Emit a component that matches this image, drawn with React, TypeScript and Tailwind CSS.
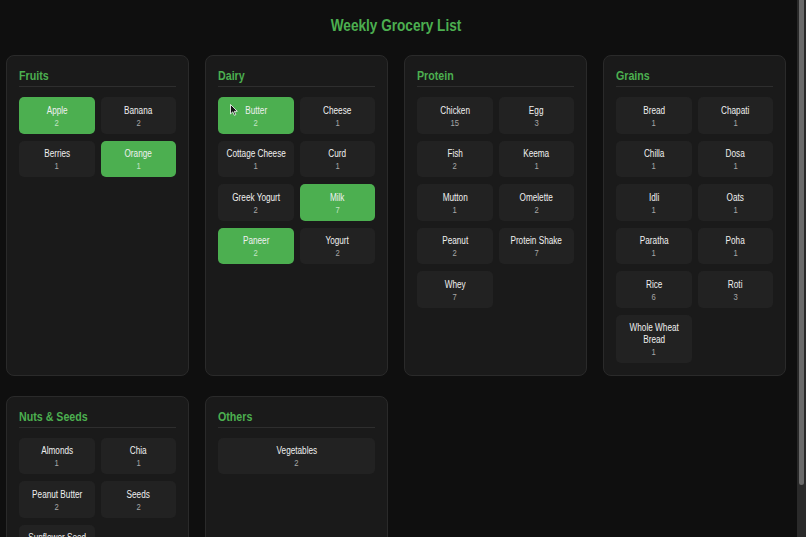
import React from "react"

type Item = { name: string; count: number; selected?: boolean }
type Category = { title: string; items: Item[] }

const categories: Category[] = [
  {
    title: "Fruits",
    items: [
      { name: "Apple", count: 2, selected: true },
      { name: "Banana", count: 2 },
      { name: "Berries", count: 1 },
      { name: "Orange", count: 1, selected: true },
    ],
  },
  {
    title: "Dairy",
    items: [
      { name: "Butter", count: 2, selected: true },
      { name: "Cheese", count: 1 },
      { name: "Cottage Cheese", count: 1 },
      { name: "Curd", count: 1 },
      { name: "Greek Yogurt", count: 2 },
      { name: "Milk", count: 7, selected: true },
      { name: "Paneer", count: 2, selected: true },
      { name: "Yogurt", count: 2 },
    ],
  },
  {
    title: "Protein",
    items: [
      { name: "Chicken", count: 15 },
      { name: "Egg", count: 3 },
      { name: "Fish", count: 2 },
      { name: "Keema", count: 1 },
      { name: "Mutton", count: 1 },
      { name: "Omelette", count: 2 },
      { name: "Peanut", count: 2 },
      { name: "Protein Shake", count: 7 },
      { name: "Whey", count: 7 },
    ],
  },
  {
    title: "Grains",
    items: [
      { name: "Bread", count: 1 },
      { name: "Chapati", count: 1 },
      { name: "Chilla", count: 1 },
      { name: "Dosa", count: 1 },
      { name: "Idli", count: 1 },
      { name: "Oats", count: 1 },
      { name: "Paratha", count: 1 },
      { name: "Poha", count: 1 },
      { name: "Rice", count: 6 },
      { name: "Roti", count: 3 },
      { name: "Whole Wheat Bread", count: 1 },
    ],
  },
  {
    title: "Nuts & Seeds",
    items: [
      { name: "Almonds", count: 1 },
      { name: "Chia", count: 1 },
      { name: "Peanut Butter", count: 2 },
      { name: "Seeds", count: 2 },
      { name: "Sunflower Seed", count: 1 },
    ],
  },
  {
    title: "Others",
    items: [{ name: "Vegetables", count: 2 }],
  },
]

// the screenshot's type is narrow, so glyphs get squeezed a bit horizontally
function GroceryItem({ item, hovered }: { item: Item; hovered?: boolean }) {
  return (
    <div
      className={
        item.selected
          ? "relative rounded-[5px] bg-[#4caf50] px-1 pb-[5px] pt-[7.5px] text-center"
          : "relative rounded-[5px] bg-[#222222] px-1 pb-[5px] pt-[7.5px] text-center"
      }
    >
      <div className="overflow-hidden">
        <div className="-ml-[11%] w-[122%] scale-x-[0.82] text-[10px] leading-[11.5px] text-[#f0f0f0]">
          {item.name}
        </div>
      </div>
      <div
        className={
          item.selected
            ? "mt-[1.5px] scale-x-[0.85] text-[9px] leading-[11px] text-[#c5e3c6]"
            : "mt-[1.5px] scale-x-[0.85] text-[9px] leading-[11px] text-[#a8a8a8]"
        }
      >
        {item.count}
      </div>
      {hovered && (
        <svg
          className="absolute left-[12px] top-[7px]"
          width="8"
          height="12"
          viewBox="0 0 8 12"
        >
          <path
            d="M0.5 0.5 L0.5 10 L2.8 7.8 L4.4 11.3 L5.8 10.7 L4.3 7.3 L7.3 7.3 Z"
            fill="#111"
            stroke="#fff"
            strokeWidth="0.8"
            strokeLinejoin="round"
          />
        </svg>
      )}
    </div>
  )
}

function CategoryCard({ category }: { category: Category }) {
  return (
    <div className="rounded-[8px] border border-[#2a2a2a] bg-[#1a1a1a] p-3">
      <div className="border-b border-[#2e2e2e] pb-[2px]">
        <h2 className="origin-left scale-x-[0.82] whitespace-nowrap text-[13px] font-bold leading-[16px] text-[#4caf50]">
          {category.title}
        </h2>
      </div>
      <div className="mt-[10px] grid grid-cols-[repeat(auto-fit,minmax(70px,1fr))] gap-x-[6px] gap-y-[7px]">
        {category.items.map((item) => (
          <GroceryItem key={item.name} item={item} hovered={item.name === "Butter"} />
        ))}
      </div>
    </div>
  )
}

export default function App() {
  return (
    <div
      className="flex h-screen bg-[#0f0f0f]"
      style={{ fontFamily: '"Liberation Sans", Arial, Helvetica, sans-serif' }}
    >
      <div className="min-w-0 flex-1 overflow-hidden">
        <div className="ml-[6px] w-[780px] pb-3 pt-4">
          <h1 className="mb-[19px] scale-x-[0.85] text-center text-[16px] font-bold leading-[20px] text-[#4caf50]">
            Weekly Grocery List
          </h1>
          <div className="grid grid-cols-4 gap-x-4 gap-y-5">
            {categories.map((c) => (
              <CategoryCard key={c.title} category={c} />
            ))}
          </div>
        </div>
      </div>
      {/* scrollbar */}
      <div className="flex w-[9px] shrink-0 flex-col bg-[#2a2a2a] px-[2px] pb-[52px]">
        <div className="flex-1 rounded-b-full bg-[#6a6a6a]" />
      </div>
    </div>
  )
}
